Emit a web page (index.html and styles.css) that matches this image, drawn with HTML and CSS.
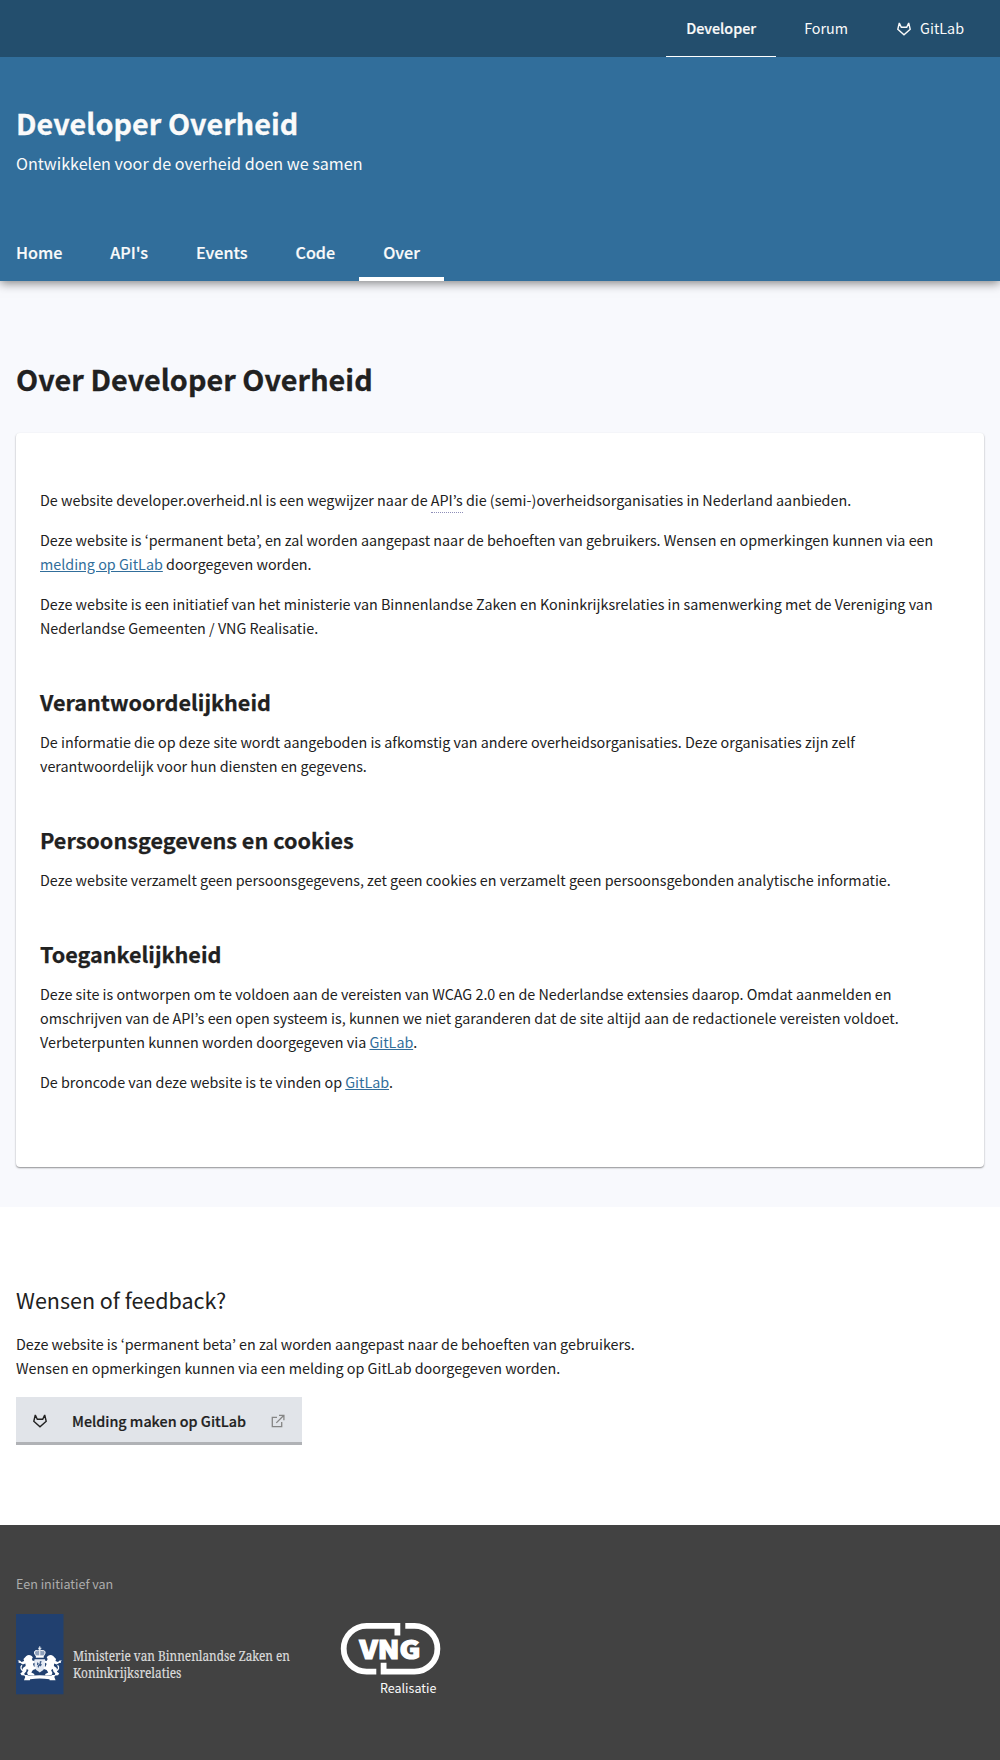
FILE: index.html
```html
<!DOCTYPE html>
<html lang="nl">
<head>
<meta charset="utf-8">
<title>Over Developer Overheid</title>
<link rel="stylesheet" href="styles.css">
</head>
<body>
<svg class="defs" width="0" height="0">
  <symbol id="gitlab" viewBox="0 0 16 16">
    <path d="M3.3 2 1.8 8.3 8 13.7l6.2-5.4L12.7 2l-2 4.3H5.3z" fill="none" stroke="currentColor" stroke-width="1.4" stroke-linejoin="miter" stroke-miterlimit="3"/>
  </symbol>
</svg>

<nav class="topbar">
  <a class="topbar-item active">Developer</a>
  <a class="topbar-item">Forum</a>
  <a class="topbar-item"><svg class="icon"><use href="#gitlab"/></svg>GitLab</a>
</nav>

<header class="header">
  <p class="site-title">Developer Overheid</p>
  <p class="site-subtitle">Ontwikkelen voor de overheid doen we samen</p>
  <nav class="main-nav">
    <a>Home</a><a>API's</a><a>Events</a><a>Code</a><a class="active">Over</a>
  </nav>
</header>

<main class="main">
  <h1>Over Developer Overheid</h1>
  <article class="card">
    <p>De website developer.overheid.nl is een wegwijzer naar de <abbr>API’s</abbr> die (semi-)overheidsorganisaties in Nederland aanbieden.</p>
    <p>Deze website is ‘permanent beta’, en zal worden aangepast naar de behoeften van gebruikers. Wensen en opmerkingen kunnen via een <a>melding op GitLab</a> doorgegeven worden.</p>
    <p>Deze website is een initiatief van het ministerie van Binnenlandse Zaken en Koninkrijksrelaties in samenwerking met de Vereniging van Nederlandse Gemeenten / VNG Realisatie.</p>
    <h2>Verantwoordelijkheid</h2>
    <p>De informatie die op deze site wordt aangeboden is afkomstig van andere overheidsorganisaties. Deze organisaties zijn zelf verantwoordelijk voor hun diensten en gegevens.</p>
    <h2>Persoonsgegevens en cookies</h2>
    <p>Deze website verzamelt geen persoonsgegevens, zet geen cookies en verzamelt geen persoonsgebonden analytische informatie.</p>
    <h2>Toegankelijkheid</h2>
    <p>Deze site is ontworpen om te voldoen aan de vereisten van WCAG 2.0 en de Nederlandse extensies daarop. Omdat aanmelden en omschrijven van de API’s een open systeem is, kunnen we niet garanderen dat de site altijd aan de redactionele vereisten voldoet. Verbeterpunten kunnen worden doorgegeven via <a>GitLab</a>.</p>
    <p>De broncode van deze website is te vinden op <a>GitLab</a>.</p>
  </article>
</main>

<section class="feedback">
  <h2>Wensen of feedback?</h2>
  <p>Deze website is ‘permanent beta’ en zal worden aangepast naar de behoeften van gebruikers.<br>Wensen en opmerkingen kunnen via een melding op GitLab doorgegeven worden.</p>
  <a class="button">
    <svg class="icon"><use href="#gitlab"/></svg>
    <span>Melding maken op GitLab</span>
    <svg class="external" viewBox="0 0 16 16" fill="none" stroke="currentColor" stroke-width="1.3"><path d="M7 4.3H2.3v9.4h9.4V9M9 2.3h4.9v4.9M13.7 2.5 6.3 9.9"/></svg>
  </a>
</section>

<footer class="footer">
  <p>Een initiatief van</p>
  <div class="logos">
    <svg class="ministry" viewBox="0 0 276 82">
      <rect width="47.5" height="80.3" fill="#21406f"/>
      <g fill="#fff" transform="translate(1.400 -.7) scale(.94 1)">
        <!-- crown -->
        <path d="M23.300 33h1v1.500h1.200v.9h-1.200v1.500h-1v-1.500h-1.200v-.9h1.200z"/>
        <path d="M19.600 42.700h8.400v1.700h-8.400z"/>
        <path d="M19.800 42.600c-3.400-3.900-1-6 1.700-5.200 1.400-.9 3.200-.9 4.600 0 2.700-.8 5.100 1.300 1.700 5.200z" fill="#8ea0bb" stroke="#fff"/>
        <path d="M23.300 37h1v5.500h-1z"/>
        <!-- shield with lion -->
        <path d="M18.200 46h11.200v6.500c0 3.200-2.600 5-5.600 6.600-3-1.600-5.600-3.400-5.600-6.600z" fill="#e4eaf3"/>
        <path d="m21 49 1.700 1-.8 2 1.600-1.200.5-3 2 .5-1.200 1.700 1.200 1.300-1.200 2-1.300-.8-1.300 2.100-.8-1.300.8-1.300-1.400-.4z" fill="#3d5a87"/>
        <!-- supporting lion, mirrored for the right side -->
        <g id="lion">
          <path d="M9.500 42.600c2.600-1.600 6-.6 6.900 1.700l-1 1.500 1 2 2-.6.200 2-2.100 1.300 1.100 2.800 1.900.3v2l-3 1.200-1.700 2.400 3.200 1.500v1.400h-6.500l-1.200-2.300 1.500-3.200-1.900-1-.6 2.600-2 2 .8 1.900-3.700-.1-1.300-1.900 2.300-1.600.4-3.700 3-2-.3-2.700-2.700 1-2.600-1.500-2-.2.200-1.300-1.200-.8 2.500-.2 1.700 1.500 2.700-.9-.6-2z"/>
          <path d="M6.300 57.500c-2.700-1.300-3.400-3.500-1.400-5.500" fill="none" stroke="#fff" stroke-width="1.400"/>
        </g>
        <use href="#lion" transform="matrix(-1 0 0 1 47.600 0)"/>
        <!-- motto ribbon -->
        <path d="M7.300 61.600h3.200l1.500 1.100c7.800-1.100 15.800-1.100 23.600 0l1.500-1.100h3.200l-1 2.200 1.300 3.200h-6.300l-.2-1.100c-7-.8-13.400-.8-20.600 0l-.2 1.100H7l1.300-3.200z"/>
      </g>
      <g class="ministry-name">
        <text x="57" y="46.500" textLength="217" lengthAdjust="spacingAndGlyphs">Ministerie van Binnenlandse Zaken en</text>
        <text x="57" y="63.800" textLength="108.500" lengthAdjust="spacingAndGlyphs">Koninkrijksrelaties</text>
      </g>
    </svg>
    <div class="vng">
      <svg viewBox="0 0 100 54">
        <g fill="none" stroke="#fff" stroke-width="5.800">
          <path d="M57.400 13.500V3.800H26.600a22.900 22.900 0 0 0 0 45.800h9.700"/>
          <path d="M65.300 3.800h9.200a22.900 22.900 0 0 1 0 45.800H43.600v-8.900"/>
        </g>
        <text class="vng-name" x="19.500" y="36.800" textLength="61" lengthAdjust="spacingAndGlyphs">VNG</text>
      </svg>
      <span>Realisatie</span>
    </div>
  </div>
</footer>
</body>
</html>
```
FILE: styles.css
```css
* { box-sizing: border-box; }

body {
  margin: 0;
  background: #fff;
  color: #212121;
  font-family: "Noto Sans CJK JP", "Noto Sans", sans-serif;
  font-size: 14.34px;
  line-height: 24px;
}

h1, h2, p { margin: 0; }
svg { display: block; flex: none; }
.defs { position: absolute; }
.icon { width: 16px; height: 16px; }

.topbar {
  position: relative;
  z-index: 1;
  display: flex;
  justify-content: flex-end;
  gap: 8px;
  height: 57px;
  padding: 0 16px;
  background: #234e6d;
  color: #fafafa;
}
.topbar-item {
  display: flex;
  align-items: center;
  gap: 8px;
  padding: 0 20px 2px;
}
.topbar-item .icon { margin-top: 2px; }
.topbar-item.active {
  font-weight: 500;
  -webkit-text-stroke: 0.2px;
  box-shadow: inset 0 -1px #fff;
}

.header {
  position: relative;
  height: 224px;
  padding: 46px 16px 0;
  background: #316e9b;
  color: #fafafa;
  box-shadow: 0 2px 10px rgba(0, 0, 0, 0.5);
}
.site-title {
  font-size: 28.75px;
  font-weight: 700;
  letter-spacing: 0.04px;
  line-height: 40px;
  -webkit-text-stroke: 0.3px;
}
.site-subtitle {
  margin-top: 8px;
  font-size: 16.13px;
}
.main-nav {
  display: flex;
  margin: 49px 0 0 -24px;
  font-size: 16.17px;
  font-weight: 500;
  -webkit-text-stroke: 0.2px;
}
.main-nav a { padding: 16px 24px 17px; }
.main-nav .active { box-shadow: inset 0 -4px #fff; }

.main {
  height: 926px;
  padding: 78px 16px 40px;
  background: #f8f9fd;
}
h1 {
  margin-bottom: 34px;
  font-size: 28.75px;
  letter-spacing: 0.04px;
  line-height: 40px;
  -webkit-text-stroke: 0.3px;
}
.card {
  height: 734px;
  padding: 55px 24px 0;
  border-radius: 4px;
  background: #fff;
  box-shadow: 0 1px 2px rgba(0, 0, 0, 0.35), 0 1px 1px rgba(0, 0, 0, 0.1);
}
.card p + p { margin-top: 16px; }
.card h2 {
  margin: 47px 0 13px;
  font-size: 21.6px;
  line-height: 30px;
  -webkit-text-stroke: 0.25px;
}
.card a {
  color: #316e9b;
  text-decoration: underline;
}
abbr {
  padding-bottom: 2px;
  border-bottom: 1px dotted #8e8eb8;
}

.feedback {
  height: 318px;
  padding: 78px 16px 0;
}
.feedback h2 {
  margin-bottom: 17px;
  font-size: 21.5px;
  font-weight: 400;
  line-height: 30px;
}
.button {
  display: inline-flex;
  align-items: center;
  gap: 24px;
  width: 286px;
  height: 48px;
  margin-top: 17px;
  padding: 0 16px;
  border-bottom: 3px solid #b0b2b6;
  background: #e1e4e9;
  font-weight: 500;
  -webkit-text-stroke: 0.2px;
}
.button span { padding-top: 2px; }
.button .icon { margin-top: 2px; }
.button .external {
  width: 16px;
  height: 16px;
  margin-top: 2px;
  color: #858585;
}

.footer {
  height: 235px;
  padding: 49px 16px 0;
  background: #424242;
}
.footer p {
  color: #adadad;
  font-size: 12.55px;
  line-height: 20px;
}
.logos {
  display: flex;
  margin-top: 19.5px;
}
.ministry {
  width: 276px;
  height: 82px;
  overflow: visible;
}
.ministry-name {
  fill: #dcdcdc;
  stroke: #dcdcdc;
  stroke-width: 0.2px;
  font-family: "Noto Serif", "Liberation Serif", serif;
  font-size: 13.5px;
}
.vng {
  width: 100px;
  margin: 8px 0 0 47.5px;
  color: #fafafa;
  font-size: 12.5px;
  line-height: 20px;
}
.vng svg {
  width: 100px;
  height: 54px;
  overflow: visible;
}
.vng-name {
  fill: #fff;
  stroke: #fff;
  stroke-width: 1.2px;
  font-size: 25px;
  font-weight: 900;
}
.vng span {
  display: block;
  margin: 2px 0 0 40.5px;
}
```
